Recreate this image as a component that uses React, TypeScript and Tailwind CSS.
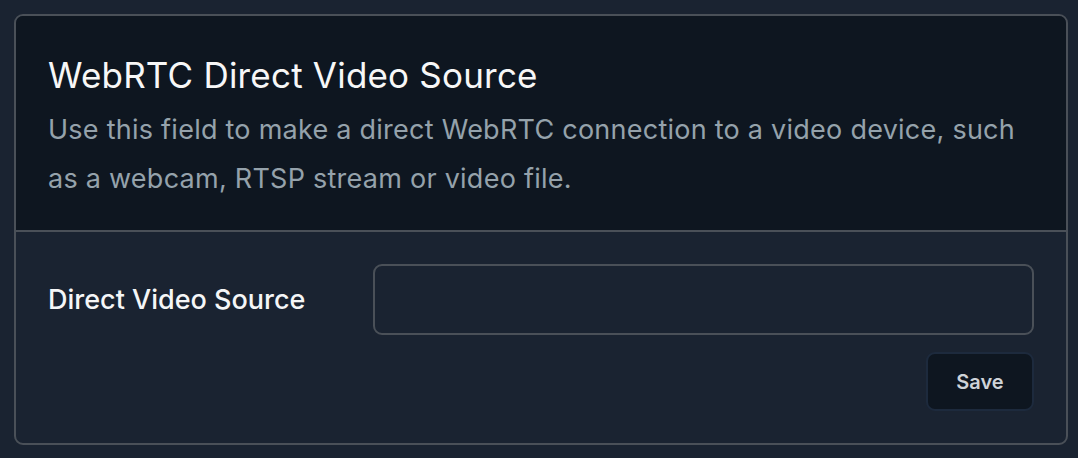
import React from 'react'

export default function App() {
  return (
    <div className="min-h-screen w-full bg-[#1a2331] pt-[14px] pl-[14px] pr-[10px] font-['Inter',sans-serif]">
      <div className="overflow-hidden rounded-[9px] border-2 border-[#4a5058]">
        {/* Header */}
        <div className="bg-[#0e1620] px-8 pt-[38px] pb-[27px] border-b-2 border-[#4a5058]">
          <h1 className="text-[35px] leading-[42px] tracking-[0.2px] text-[#f7f7f7] font-normal">
            WebRTC Direct Video Source
          </h1>
          <p className="mt-[9px] max-w-[975px] text-[27px] leading-[49px] tracking-[0.25px] text-[#95a2ab]">
            Use this field to make a direct WebRTC connection to a video device, such as a webcam, RTSP stream or video
            file.
          </p>
        </div>

        {/* Form */}
        <div className="px-8 pt-8 pb-8">
          <div className="flex items-center">
            <label className="w-[325px] shrink-0 pt-[2px] text-[27px] font-medium text-[#f5f6f7]">
              Direct Video Source
            </label>
            <input
              type="text"
              className="h-[71px] flex-1 rounded-[9px] border-2 border-[#4a5058] bg-transparent px-4 text-[22px] text-white outline-none"
            />
          </div>
          <div className="mt-[17px] flex justify-end">
            <button className="h-[59px] w-[108px] rounded-[9px] border-2 border-[#1d2a3d] bg-[#0e1620] text-[20px] font-semibold text-[#cfd3d8]">
              Save
            </button>
          </div>
        </div>
      </div>
    </div>
  )
}
